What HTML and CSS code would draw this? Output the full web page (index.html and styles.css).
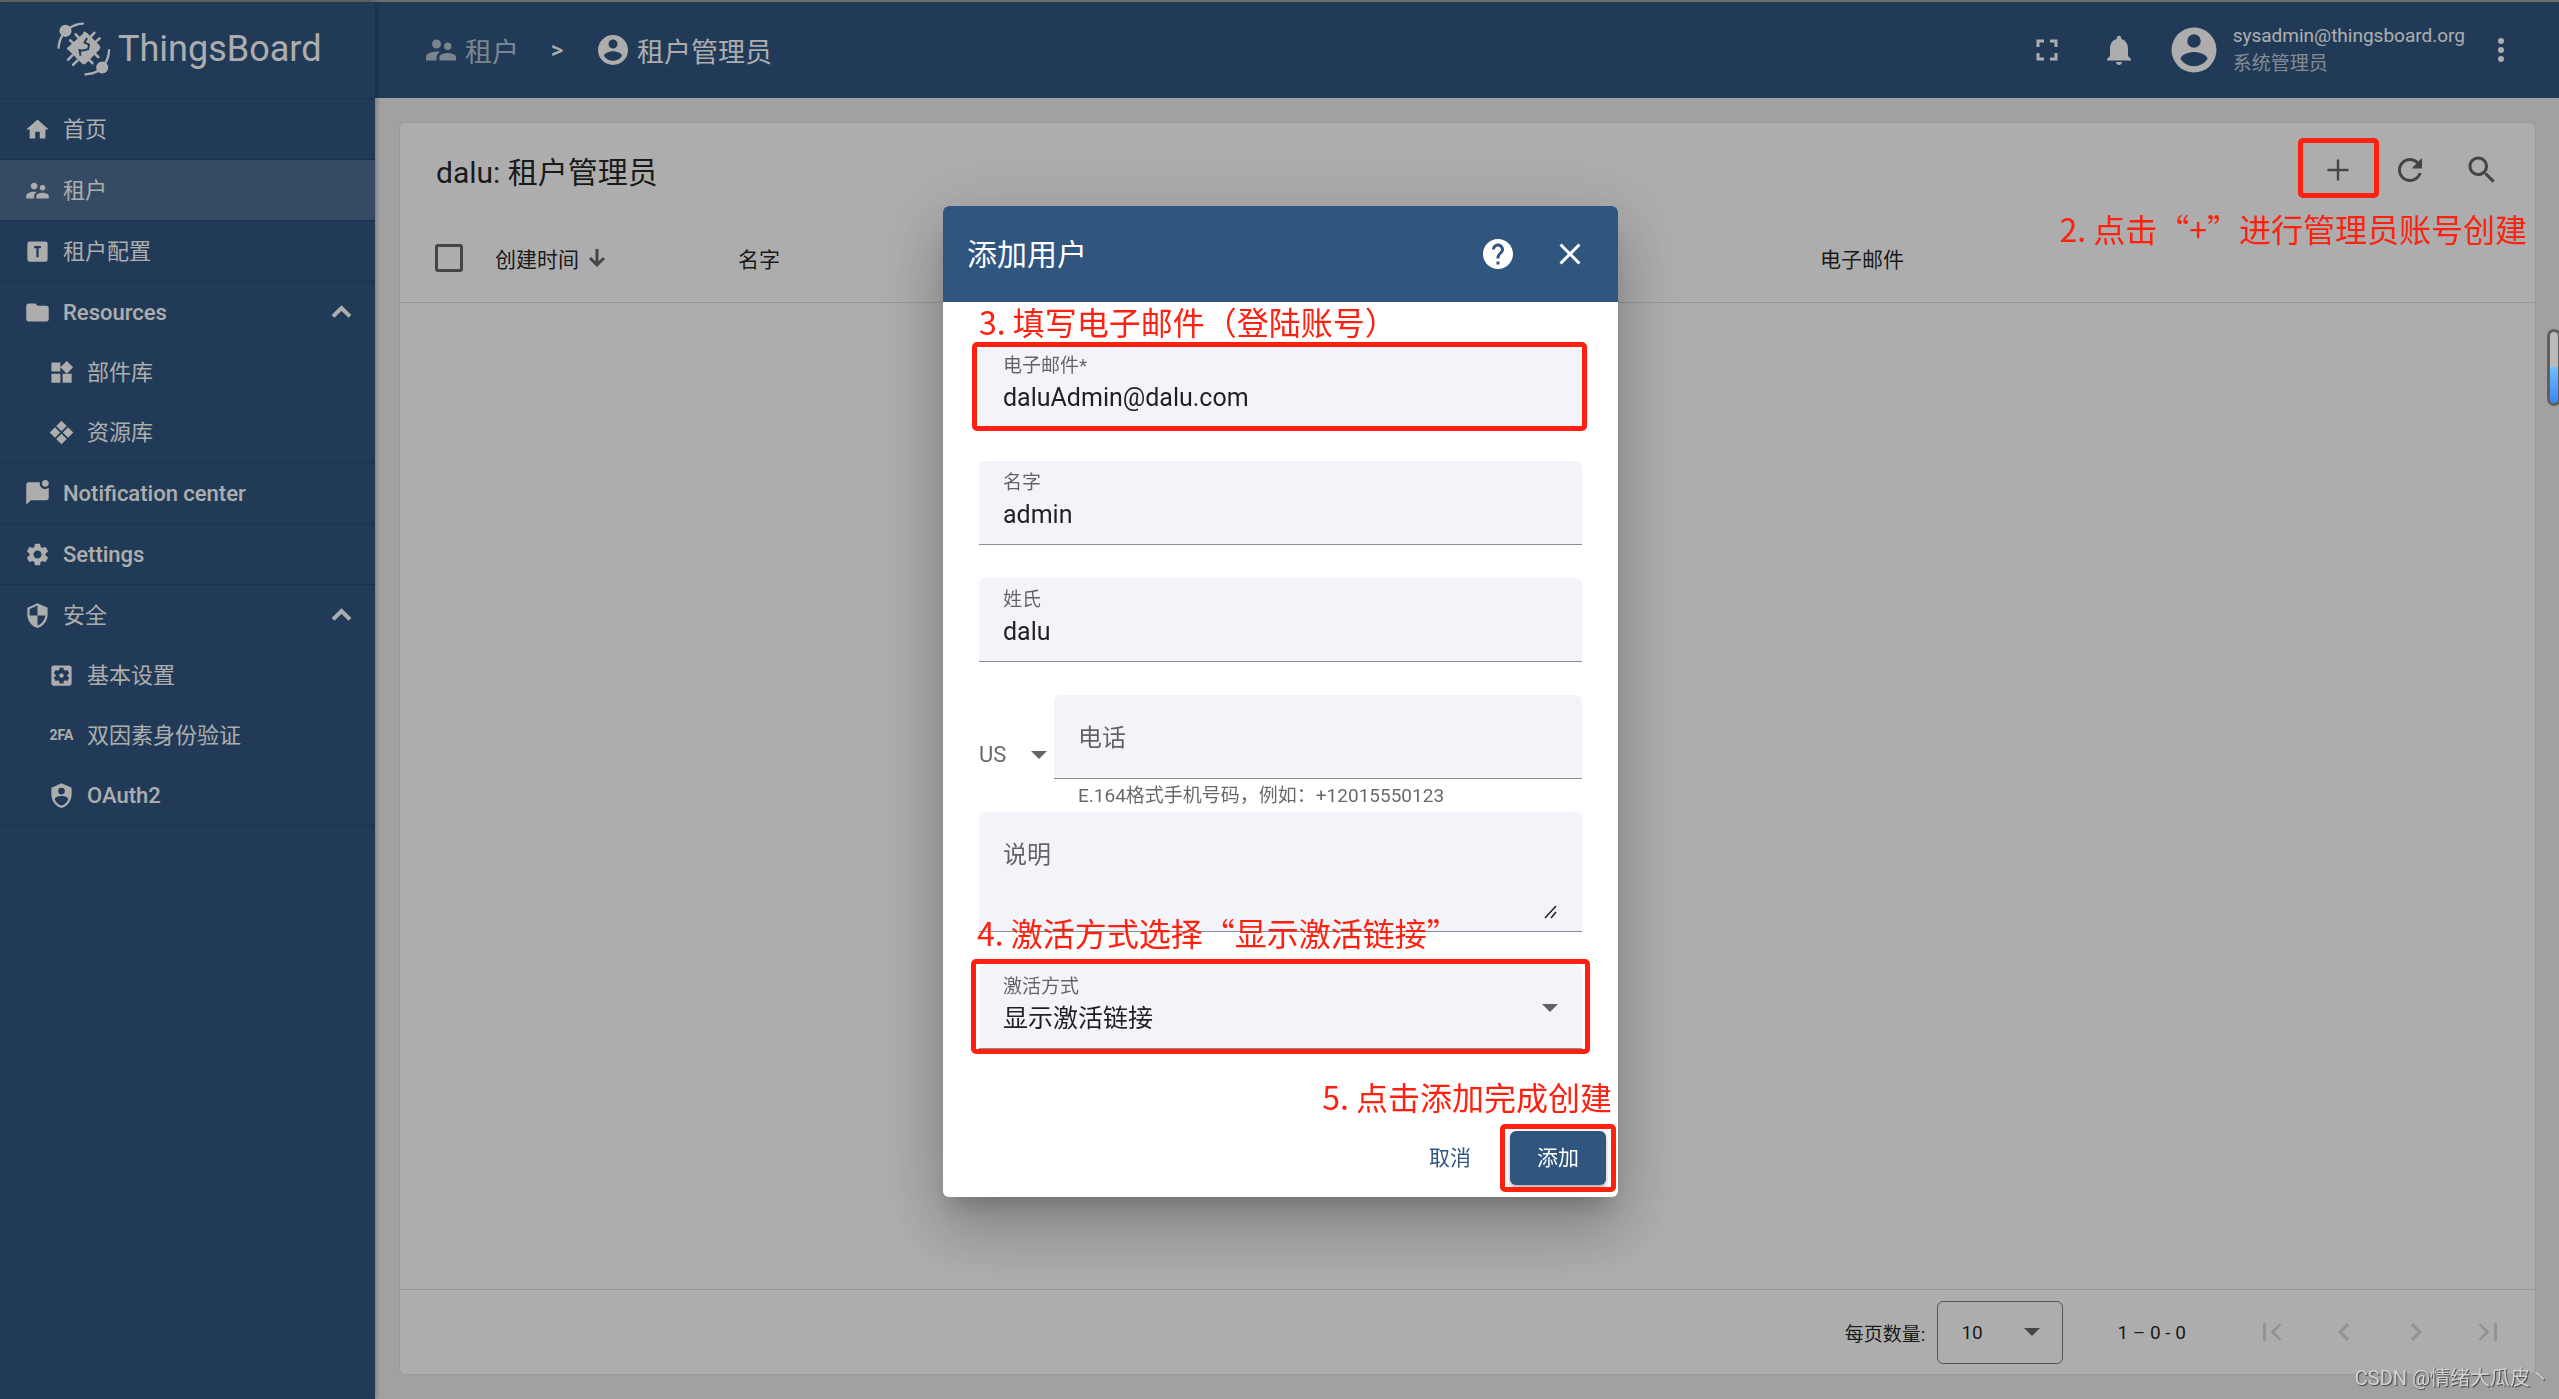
FILE: index.html
```html
<!DOCTYPE html>
<html lang="zh-CN">
<head>
<meta charset="utf-8">
<title>ThingsBoard | 租户管理员</title>
<link rel="stylesheet" href="styles.css">
</head>
<body>
<svg class="sprite" aria-hidden="true">
  <symbol id="home" viewBox="0 0 24 24"><path d="M10 20v-6h4v6h5v-8h3L12 3 2 12h3v8z"/></symbol>
  <symbol id="people" viewBox="0 0 24 24"><path d="M16.5 12c1.38 0 2.49-1.12 2.49-2.5S17.88 7 16.5 7C15.12 7 14 8.12 14 9.500s1.12 2.500 2.500 2.500zM9 11c1.660 0 2.990-1.340 2.990-3S10.660 5 9 5C7.340 5 6 6.340 6 8s1.340 3 3 3zm7.500 3c-1.830 0-5.500.920-5.500 2.750V19h11v-2.250c0-1.830-3.670-2.750-5.500-2.750zM9 13c-2.330 0-7 1.170-7 3.500V19h7v-2.250c0-.850.330-2.340 2.370-3.470C10.500 13.100 9.660 13 9 13z"/></symbol>
  <symbol id="profile" viewBox="0 0 24 24"><path fill-rule="evenodd" d="M9 7v2h2v8h2V9h2V7H9M5 3h14a2 2 0 0 1 2 2v14a2 2 0 0 1-2 2H5a2 2 0 0 1-2-2V5a2 2 0 0 1 2-2z"/></symbol>
  <symbol id="folder" viewBox="0 0 24 24"><path d="M10 4H4c-1.100 0-1.990.900-1.990 2L2 18c0 1.100.900 2 2 2h16c1.100 0 2-.900 2-2V8c0-1.100-.900-2-2-2h-8l-2-2z"/></symbol>
  <symbol id="widgets" viewBox="0 0 24 24"><path d="M13 13v8h8v-8h-8zM3 21h8v-8H3v8zM3 3v8h8V3H3zm13.660-1.310L11 7.340 16.660 13l5.660-5.660-5.660-5.650z"/></symbol>
  <symbol id="library" viewBox="0 0 24 24"><path d="M12 1.500l4.700 4.700L12 10.900 7.300 6.200zM12 13.100l4.700 4.700L12 22.500l-4.700-4.700zM6.200 7.300l4.700 4.700-4.700 4.700L1.500 12zM17.800 7.300l4.700 4.700-4.700 4.700-4.700-4.700z"/></symbol>
  <symbol id="chat" viewBox="0 0 24 24"><path d="M22 6.980V16c0 1.100-.900 2-2 2H6l-4 4V4c0-1.100.900-2 2-2h10.100c-.060.320-.100.660-.100 1 0 2.760 2.240 5 5 5 1.130 0 2.160-.390 3-1.020zM16 3c0 1.660 1.340 3 3 3s3-1.340 3-3-1.340-3-3-3-3 1.340-3 3z"/></symbol>
  <symbol id="gear" viewBox="0 0 24 24"><path d="M19.140 12.940c.040-.300.060-.610.060-.940 0-.320-.020-.640-.070-.940l2.030-1.580c.180-.140.230-.410.120-.610l-1.920-3.320c-.120-.220-.370-.290-.590-.220l-2.390.960c-.500-.380-1.030-.700-1.620-.940l-.360-2.540c-.040-.240-.240-.410-.480-.410h-3.840c-.240 0-.430.170-.470.410l-.360 2.540c-.590.240-1.130.570-1.620.940l-2.390-.960c-.220-.080-.470 0-.590.220L2.740 8.870c-.120.210-.080.470.120.610l2.030 1.580c-.050.300-.090.630-.090.940s.020.640.070.940l-2.030 1.580c-.180.140-.230.410-.120.610l1.920 3.320c.120.220.370.290.590.220l2.390-.960c.500.380 1.030.700 1.620.940l.360 2.540c.050.240.240.410.480.410h3.840c.240 0 .440-.170.470-.410l.360-2.540c.590-.240 1.130-.560 1.620-.940l2.390.960c.220.080.470 0 .590-.220l1.920-3.320c.120-.220.070-.470-.120-.610l-2.010-1.580zM12 15.600c-1.980 0-3.600-1.620-3.600-3.600s1.620-3.600 3.600-3.600 3.600 1.620 3.600 3.600-1.620 3.600-3.600 3.600z"/></symbol>
  <symbol id="shield" viewBox="0 0 24 24"><path fill-rule="evenodd" d="M12 1L3 5v6c0 5.550 3.840 10.730 9 12 5.160-1.270 9-6.450 9-12V5l-9-4zM12 12h7c-.530 4.110-3.280 7.780-7 8.920V12H5V6.300l7-3.110z"/></symbol>
  <symbol id="gearbox" viewBox="0 0 24 24"><path d="M12 10c-1.100 0-2 .900-2 2s.900 2 2 2 2-.900 2-2-.900-2-2-2zm7-7H5c-1.110 0-2 .900-2 2v14c0 1.100.890 2 2 2h14c1.110 0 2-.900 2-2V5c0-1.100-.890-2-2-2zm-1.750 9c0 .230-.020.460-.050.680l1.480 1.160c.130.110.170.300.080.450l-1.400 2.420c-.090.150-.270.210-.430.150l-1.740-.700c-.360.280-.760.510-1.180.690l-.260 1.850c-.030.170-.180.300-.350.300h-2.800c-.170 0-.320-.130-.350-.290l-.260-1.850c-.430-.180-.820-.410-1.180-.690l-1.740.700c-.160.060-.340 0-.430-.150l-1.400-2.420c-.090-.150-.050-.340.080-.450l1.480-1.160c-.030-.230-.050-.460-.050-.690 0-.230.020-.460.050-.680l-1.480-1.160c-.130-.110-.170-.300-.080-.450l1.400-2.420c.090-.150.270-.210.430-.150l1.740.700c.360-.280.760-.510 1.180-.690l.260-1.850c.030-.170.180-.300.350-.300h2.800c.170 0 .320.130.350.290l.260 1.850c.430.180.820.410 1.180.690l1.740-.700c.160-.060.340 0 .430.150l1.400 2.420c.090.150.050.340-.080.450l-1.480 1.160c.030.230.050.460.050.690z"/></symbol>
  <symbol id="shielduser" viewBox="0 0 24 24"><path fill-rule="evenodd" d="M12 1L3 5v6c0 5.550 3.840 10.740 9 12 5.160-1.260 9-6.450 9-12V5l-9-4M12 5a3 3 0 0 1 3 3 3 3 0 0 1-3 3 3 3 0 0 1-3-3 3 3 0 0 1 3-3M17.130 17C15.920 18.850 14.110 20.240 12 20.920 9.890 20.240 8.080 18.850 6.870 17 6.530 16.500 6.240 16 6 15.470 6 13.820 8.710 12.470 12 12.470S18 13.790 18 15.470C17.760 16 17.470 16.500 17.130 17z"/></symbol>
  <symbol id="up" viewBox="0 0 24 24"><path d="M4.500 15.500L12 8l7.500 7.500" fill="none" stroke="currentColor" stroke-width="3.600"/></symbol>
  <symbol id="user" viewBox="0 0 24 24"><path fill-rule="evenodd" d="M12 19.200c-2.500 0-4.710-1.280-6-3.200.030-2 4-3.100 6-3.100s5.970 1.100 6 3.100c-1.290 1.920-3.500 3.200-6 3.200M12 5a3 3 0 0 1 3 3 3 3 0 0 1-3 3 3 3 0 0 1-3-3 3 3 0 0 1 3-3M12 2A10 10 0 0 0 2 12a10 10 0 0 0 10 10 10 10 0 0 0 10-10C22 6.470 17.500 2 12 2z"/></symbol>
  <symbol id="fullscreen" viewBox="0 0 24 24"><path d="M7 14H5v5h5v-2H7v-3zm-2-4h2V7h3V5H5v5zm12 7h-3v2h5v-5h-2v3zM14 5v2h3v3h2V5h-5z"/></symbol>
  <symbol id="bell" viewBox="0 0 24 24"><path d="M12 22c1.100 0 2-.900 2-2h-4c0 1.100.890 2 2 2zm6-6v-5c0-3.070-1.640-5.640-4.500-6.320V4c0-.830-.670-1.500-1.500-1.500s-1.500.670-1.500 1.500v.680C7.630 5.360 6 7.920 6 11v5l-2 2v1h16v-1l-2-2z"/></symbol>
  <symbol id="more" viewBox="0 0 24 24"><circle cx="12" cy="6" r="2"/><circle cx="12" cy="12" r="2"/><circle cx="12" cy="18" r="2"/></symbol>
  <symbol id="add" viewBox="0 0 24 24"><path d="M19 12.800h-6.200V19h-1.600v-6.200H5v-1.600h6.200V5h1.600v6.200H19z"/></symbol>
  <symbol id="refresh" viewBox="0 0 24 24"><path d="M17.650 6.350C16.200 4.900 14.210 4 12 4c-4.420 0-7.990 3.580-7.990 8s3.570 8 7.990 8c3.730 0 6.840-2.550 7.730-6h-2.080c-.820 2.330-3.040 4-5.650 4-3.310 0-6-2.690-6-6s2.690-6 6-6c1.660 0 3.140.690 4.220 1.780L13 11h7V4l-2.350 2.350z"/></symbol>
  <symbol id="search" viewBox="0 0 24 24"><path d="M15.500 14h-.790l-.280-.270C15.410 12.590 16 11.110 16 9.500 16 5.910 13.090 3 9.500 3S3 5.910 3 9.500 5.910 16 9.500 16c1.610 0 3.090-.590 4.230-1.570l.270.280v.790l5 4.990L20.490 19l-4.990-5zm-6 0C7.010 14 5 11.990 5 9.500S7.010 5 9.500 5 14 7.010 14 9.500 11.990 14 9.500 14z"/></symbol>
  <symbol id="help" viewBox="0 0 24 24"><path d="M12 2C6.480 2 2 6.480 2 12s4.480 10 10 10 10-4.480 10-10S17.520 2 12 2zm1 17h-2v-2h2v2zm2.070-7.750l-.900.920C13.450 12.900 13 13.500 13 15h-2v-.500c0-1.100.450-2.100 1.170-2.830l1.240-1.260c.370-.360.590-.860.590-1.410 0-1.100-.900-2-2-2s-2 .900-2 2H8c0-2.210 1.790-4 4-4s4 1.790 4 4c0 .880-.360 1.680-.930 2.250z"/></symbol>
  <symbol id="close" viewBox="0 0 24 24"><path d="M19 6.410L17.590 5 12 10.590 6.410 5 5 6.410 10.590 12 5 17.590 6.410 19 12 13.410 17.590 19 19 17.590 13.410 12z"/></symbol>
  <symbol id="sort" viewBox="0 0 18 20"><path d="M9 1v16M2 10l7 7 7-7" fill="none" stroke="currentColor" stroke-width="3"/></symbol>
  <symbol id="caret" viewBox="0 0 16 8"><path d="M0 0h16L8 8z"/></symbol>
  <symbol id="first" viewBox="0 0 24 24"><path d="M18.410 16.590L13.820 12l4.590-4.590L17 6l-6 6 6 6zM6 6h2v12H6z"/></symbol>
  <symbol id="prev" viewBox="0 0 24 24"><path d="M15.410 7.410L14 6l-6 6 6 6 1.410-1.410L10.830 12z"/></symbol>
  <symbol id="next" viewBox="0 0 24 24"><path d="M10 6L8.590 7.410 13.170 12l-4.580 4.590L10 18l6-6z"/></symbol>
  <symbol id="last" viewBox="0 0 24 24"><path d="M5.590 7.410L10.180 12l-4.590 4.590L7 18l6-6-6-6zM16 6h2v12h-2z"/></symbol>
</svg>

<div class="app">
  <aside class="sidebar">
    <div class="brand">
      <svg class="brand-mark" viewBox="50 37 165 165" fill="none" stroke="currentColor" stroke-width="8" stroke-linecap="round" aria-hidden="true">
        <path d="M131 71q6-5 12 0l37 38q5 6 0 12l-42 43q-6 5-12 0l-40-40q-5-6 0-12z" fill="currentColor" stroke="none"/>
        <path d="M107 75l12 13M90 93l14 13M164 70l-12 13M180 87l-14 13M84 152l13-13M99 168l13-13M158 163l-11-12M176 144l-12-12M134 70v8M84 118h8"/>
        <path d="M142 86l-8 14 14 6-3 14-19 5-7-2 3 17" stroke="#305680" stroke-width="6" stroke-linecap="butt"/>
        <circle cx="76" cy="64" r="15" stroke-width="7"/>
        <circle cx="188" cy="176" r="15" stroke-width="7"/>
        <path d="M129 42q-24 1-40 13M67 77q-11 17-12 39M209 123q-1 24-12 40M176 187q-16 9-39 10" stroke-width="7"/>
      </svg>
      <span>ThingsBoard</span>
    </div>
    <nav class="menu">
      <div class="group"><a class="item" href="#"><svg><use href="#home"/></svg><span class="han">首页</span></a></div>
      <div class="group"><a class="item active" href="#"><svg><use href="#people"/></svg><span class="han">租户</span></a></div>
      <div class="group"><a class="item" href="#"><svg><use href="#profile"/></svg><span class="han">租户配置</span></a></div>
      <div class="group">
        <a class="item latin" href="#"><svg><use href="#folder"/></svg>Resources<svg class="toggle"><use href="#up"/></svg></a>
        <a class="item sub" href="#"><svg><use href="#widgets"/></svg><span class="han">部件库</span></a>
        <a class="item sub" href="#"><svg><use href="#library"/></svg><span class="han">资源库</span></a>
      </div>
      <div class="group"><a class="item latin" href="#"><svg><use href="#chat"/></svg>Notification center</a></div>
      <div class="group"><a class="item latin" href="#"><svg><use href="#gear"/></svg>Settings</a></div>
      <div class="group">
        <a class="item" href="#"><svg><use href="#shield"/></svg><span class="han">安全</span><svg class="toggle"><use href="#up"/></svg></a>
        <a class="item sub" href="#"><svg><use href="#gearbox"/></svg><span class="han">基本设置</span></a>
        <a class="item sub" href="#"><span class="badge-2fa">2FA</span><span class="han">双因素身份验证</span></a>
        <a class="item sub latin" href="#"><svg><use href="#shielduser"/></svg>OAuth2</a>
      </div>
    </nav>
  </aside>

  <div class="main">
    <header class="topbar">
      <nav class="crumbs">
        <a class="crumb parent" href="#"><svg><use href="#people"/></svg>租户</a>
        <span class="separator">&gt;</span>
        <a class="crumb" href="#"><svg><use href="#user"/></svg>租户管理员</a>
      </nav>
      <div class="account">
        <button class="icon-button" aria-label="全屏"><svg><use href="#fullscreen"/></svg></button>
        <button class="icon-button" aria-label="通知"><svg><use href="#bell"/></svg></button>
        <svg class="avatar"><use href="#user"/></svg>
        <div class="who"><span>sysadmin@thingsboard.org</span><span class="role">系统管理员</span></div>
        <button class="icon-button" aria-label="更多"><svg><use href="#more"/></svg></button>
      </div>
    </header>

    <main class="content">
      <section class="card">
        <div class="toolbar">
          <h1>dalu: 租户管理员</h1>
          <div class="tools">
            <button class="icon-button" aria-label="添加用户"><svg><use href="#add"/></svg></button>
            <button class="icon-button" aria-label="刷新"><svg><use href="#refresh"/></svg></button>
            <button class="icon-button" aria-label="搜索"><svg><use href="#search"/></svg></button>
          </div>
        </div>
        <table class="users">
          <thead>
            <tr>
              <th class="col-check"><input type="checkbox" aria-label="全选"></th>
              <th class="col-time"><span class="sorted">创建时间<svg><use href="#sort"/></svg></span></th>
              <th>名字</th>
              <th class="col-email">电子邮件</th>
            </tr>
          </thead>
        </table>
        <footer class="pager">
          <label for="page-size">每页数量:</label>
          <div class="select-box page-size">
            <select id="page-size"><option>10</option></select>
            <svg class="caret"><use href="#caret"/></svg>
          </div>
          <span class="range">1 – 0 - 0</span>
          <div class="pages">
            <button class="icon-button" aria-label="首页" disabled><svg><use href="#first"/></svg></button>
            <button class="icon-button" aria-label="上一页" disabled><svg><use href="#prev"/></svg></button>
            <button class="icon-button" aria-label="下一页" disabled><svg><use href="#next"/></svg></button>
            <button class="icon-button" aria-label="末页" disabled><svg><use href="#last"/></svg></button>
          </div>
        </footer>
      </section>
    </main>
  </div>
</div>

<div class="backdrop">
  <form class="dialog" role="dialog" aria-labelledby="dialog-title">
    <header class="dialog-head">
      <h2 id="dialog-title" class="han">添加用户</h2>
      <button type="button" class="icon-button" aria-label="帮助"><svg><use href="#help"/></svg></button>
      <button type="button" class="icon-button" aria-label="关闭"><svg><use href="#close"/></svg></button>
    </header>
    <div class="dialog-body">
      <div class="field">
        <label for="email">电子邮件*</label>
        <input id="email" type="text" value="daluAdmin@dalu.com">
        <span class="mark mark-email"></span>
        <p class="note note-email">3. 填写电子邮件（登陆账号）</p>
      </div>
      <div class="field">
        <label for="first-name">名字</label>
        <input id="first-name" type="text" value="admin">
      </div>
      <div class="field">
        <label for="last-name">姓氏</label>
        <input id="last-name" type="text" value="dalu">
      </div>
      <div class="phone">
        <div class="select-box country">
          <select aria-label="国家"><option>US</option></select>
          <svg class="caret"><use href="#caret"/></svg>
        </div>
        <div class="phone-main">
          <div class="field empty"><input type="tel" aria-label="电话" placeholder="电话"></div>
          <p class="hint">E.164格式手机号码，例如：+12015550123</p>
        </div>
      </div>
      <div class="field empty tall">
        <textarea aria-label="说明" placeholder="说明"></textarea>
        <svg class="grip" viewBox="0 0 14 14" aria-hidden="true"><path d="M1 13L12 1M7 13l5-6" fill="none" stroke="currentColor" stroke-width="1.500"/></svg>
      </div>
      <div class="field">
        <label for="activation">激活方式</label>
        <div class="select-box activation">
          <select id="activation"><option>显示激活链接</option></select>
          <svg class="caret"><use href="#caret"/></svg>
        </div>
        <span class="mark mark-activation"></span>
        <p class="note note-activation">4. 激活方式选择“显示激活链接”</p>
      </div>
    </div>
    <div class="dialog-actions">
      <button type="button" class="cancel han">取消</button>
      <div class="submit-wrap">
        <button type="submit" class="submit han">添加</button>
        <span class="mark mark-submit"></span>
        <p class="note note-submit">5. 点击添加完成创建</p>
      </div>
    </div>
  </form>
</div>

<span class="mark mark-add"></span>
<p class="note note-add">2. 点击“+”进行管理员账号创建</p>
<div class="meter"></div>
<p class="watermark">CSDN @情绪大瓜皮丶</p>
</body>
</html>
```
FILE: styles.css
```css
* { box-sizing: border-box; }

body {
  position: relative;
  overflow-x: hidden;
  margin: 0;
  font-family: Roboto, "Noto Sans CJK SC", sans-serif;
  font-size: 21px;
  color: rgba(0, 0, 0, .87);
  background: #eee;
}

h1, h2, p { margin: 0; font-weight: 400; }
a { color: inherit; text-decoration: none; }
svg { fill: currentColor; flex: none; }
.sprite { display: none; }

button, input, select, textarea {
  font: inherit;
  color: inherit;
  background: none;
  border: 0;
  padding: 0;
  margin: 0;
  outline: 0;
}

select { appearance: none; }

/* Lifts Han text to the optical centre of its row */
.han { padding-bottom: 4px; }

.icon-button {
  width: 72px;
  height: 72px;
  display: grid;
  place-items: center;
}
.icon-button svg { width: 36px; height: 36px; }

/* Shell */
.app {
  display: flex;
  min-height: 100vh;
  border-top: 2px solid #6e6e6e;
}

.sidebar {
  width: 375px;
  flex: none;
  color: #fff;
  background: #305680;
  box-shadow: 0 0 6px rgba(0, 0, 0, .4);
  z-index: 1;
}

.brand {
  height: 97px;
  padding: 0 0 2px 57px;
  display: flex;
  align-items: center;
  gap: 7px;
  font-size: 36px;
  border-bottom: 1px solid #2a4b70;
}
.brand-mark { width: 54px; height: 54px; }

.group { border-bottom: 1px solid #2a4b70; }

.item {
  height: 60px;
  padding: 0 20px 0 24px;
  display: flex;
  align-items: center;
  gap: 12px;
  font-size: 22px;
}
.item svg { width: 27px; height: 27px; }
.item.latin { font-weight: 500; }
.item.sub { padding-left: 48px; }
.item.active { background: rgba(255, 255, 255, .15); }
.item .toggle { margin-left: auto; }
.badge-2fa {
  width: 27px;
  font-size: 14px;
  font-weight: 700;
  text-align: center;
}

.main {
  flex: 1;
  min-width: 0;
  display: flex;
  flex-direction: column;
}

.topbar {
  height: 96px;
  padding: 0 22px 0 48px;
  display: flex;
  align-items: center;
  justify-content: space-between;
  color: #fff;
  background: #305680;
}

.crumbs { display: flex; align-items: center; font-size: 27px; }
.crumb { display: flex; align-items: center; gap: 6px; }
.crumb svg { width: 36px; height: 36px; }
.crumb.parent { opacity: .65; }
.separator { width: 76px; text-align: center; font-size: 24px; font-weight: 500; }

.account { display: flex; align-items: center; }
.avatar { width: 54px; height: 54px; margin: 0 12px; }
.who {
  display: flex;
  flex-direction: column;
  font-size: 19px;
  line-height: 28px;
}
.role { opacity: .7; }

.content { flex: 1; padding: 24px 23px 24px 24px; display: flex; }

/* Table card */
.card {
  flex: 1;
  display: flex;
  flex-direction: column;
  background: #fff;
  border: 1px solid #e0e0e0;
  border-radius: 6px;
}

.toolbar {
  height: 94px;
  padding: 0 17px 0 36px;
  display: flex;
  align-items: center;
  justify-content: space-between;
}
.toolbar h1 { font-size: 30px; }
.tools { display: flex; color: rgba(0, 0, 0, .6); }

.users {
  width: 100%;
  table-layout: fixed;
  border-collapse: collapse;
}
.users th {
  height: 85px;
  padding: 0 0 2px;
  text-align: left;
  font-weight: 400;
  border-bottom: 1px solid #e0e0e0;
}
.users .col-check { width: 95px; padding-left: 35px; }
.col-time { width: 243px; }
.col-email { width: 715px; }
.col-check input {
  display: block;
  appearance: none;
  width: 28px;
  height: 28px;
  border: 3px solid rgba(0, 0, 0, .6);
  border-radius: 3px;
}
.sorted { display: flex; align-items: center; gap: 9px; }
.sorted svg { width: 18px; height: 20px; color: rgba(0, 0, 0, .6); }

.pager {
  height: 85px;
  margin-top: auto;
  padding-right: 11px;
  display: flex;
  align-items: center;
  justify-content: flex-end;
  border-top: 1px solid #e0e0e0;
  font-size: 19px;
}
.pages { display: flex; color: rgba(0, 0, 0, .15); }
.range { margin: 0 50px 0 54px; }

/* Drop-downs with their own caret */
.select-box { display: grid; align-items: center; }
.select-box > * { grid-area: 1 / 1; }
.caret {
  width: 16px;
  height: 8px;
  justify-self: end;
  color: rgba(0, 0, 0, .6);
  pointer-events: none;
}

.page-size {
  width: 126px;
  height: 63px;
  margin-left: 12px;
  padding: 0 22px 0 23px;
  border: 1px solid rgba(0, 0, 0, .5);
  border-radius: 6px;
}

/* Dialog */
.backdrop {
  position: fixed;
  inset: 2px 0 0;
  z-index: 2;
  padding: 1px 0 0 2px;
  display: grid;
  place-items: center;
  background: rgba(0, 0, 0, .32);
}

.dialog {
  width: 675px;
  background: #fff;
  border-radius: 6px;
  box-shadow: 0 16px 22px -10px rgba(0, 0, 0, .2), 0 36px 57px 4px rgba(0, 0, 0, .14), 0 13px 69px 12px rgba(0, 0, 0, .12);
}

.dialog-head {
  height: 96px;
  padding: 0 12px 0 24px;
  display: flex;
  align-items: center;
  color: #fff;
  background: #305680;
  border-radius: 6px 6px 0 0;
}
.dialog-head h2 { flex: 1; font-size: 30px; }

.dialog-body {
  padding: 42px 36px 70px;
  display: flex;
  flex-direction: column;
  gap: 33px;
}

.field {
  position: relative;
  height: 84px;
  padding: 8px 24px 0;
  display: flex;
  flex-direction: column;
  background: #f3f4f9;
  border-bottom: 1px solid #8b8c8f;
  border-radius: 6px 6px 0 0;
}
.field label {
  font-size: 19px;
  line-height: 28px;
  color: rgba(0, 0, 0, .6);
}
.field input, .field select, .field textarea {
  width: 100%;
  height: 36px;
  font-size: 25px;
  line-height: 36px;
}
.field.empty { padding-top: 25px; }
.field ::placeholder { color: rgba(0, 0, 0, .6); opacity: 1; font-size: 24px; }
.field.tall { height: 120px; }
.field textarea { height: 83px; resize: none; }
.grip {
  position: absolute;
  right: 24px;
  bottom: 12px;
  width: 14px;
  height: 14px;
}
.activation .caret { align-self: start; margin-top: 3px; }

.phone { display: flex; margin-bottom: -33px; }
.phone-main { flex: 1; }
.country {
  width: 75px;
  height: 48px;
  margin-top: 36px;
  padding-right: 7px;
  font-size: 22px;
  color: rgba(0, 0, 0, .6);
}
.hint {
  padding-left: 24px;
  font-size: 19px;
  line-height: 33px;
  color: rgba(0, 0, 0, .6);
}

.dialog-actions {
  padding: 12px;
  display: flex;
  justify-content: flex-end;
  gap: 12px;
}
.cancel { width: 96px; height: 54px; color: #305680; }
.submit-wrap { position: relative; }
.submit {
  width: 96px;
  height: 54px;
  color: #fff;
  background: #305680;
  border-radius: 6px;
  box-shadow: 0 3px 4px rgba(0, 0, 0, .3);
}

/* Tutorial marks drawn over the page */
.mark {
  position: absolute;
  border: 5px solid #ff2010;
  border-radius: 5px;
  pointer-events: none;
}
.note {
  position: absolute;
  font-family: "Noto Sans CJK SC", sans-serif;
  font-size: 32px;
  line-height: 40px;
  color: #ff2010;
  white-space: nowrap;
}
.mark-email { inset: -2px -5px -4px -7px; }
.note-email { left: 0; top: -43px; }
.mark-activation { inset: -6px -8px -6px -8px; }
.note-activation { left: -2px; top: -53px; }
.mark-submit { inset: -7px -10px -7px -10px; }
.note-submit { right: -6px; top: -55px; }
.mark-add { top: 138px; right: 180px; width: 81px; height: 60px; z-index: 3; }
.note-add { top: 208px; right: 32px; z-index: 3; }

.meter {
  position: absolute;
  top: 329px;
  right: -2px;
  width: 14px;
  height: 77px;
  z-index: 3;
  border: 3px solid #5f5f5f;
  border-radius: 7px;
  background: linear-gradient(#bbb 0 50%, #6fc0ff 50%, #3a86f5);
}

.watermark {
  position: absolute;
  right: 9px;
  bottom: 6px;
  z-index: 3;
  font-size: 20px;
  line-height: 30px;
  color: #d2d2d2;
  text-shadow: 1px 1px 1px rgba(0, 0, 0, .6);
}
```
